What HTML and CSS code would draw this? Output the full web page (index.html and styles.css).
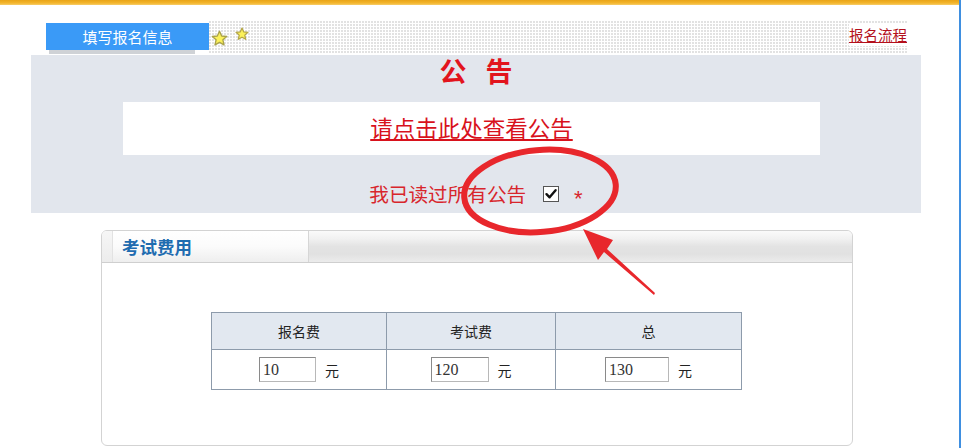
FILE: index.html
```html
<!DOCTYPE html>
<html lang="zh-CN">
<head>
<meta charset="utf-8">
<title>填写报名信息</title>
<link rel="stylesheet" href="styles.css">
</head>
<body>
<div class="page">
  <div class="topbar"></div>

  <div class="tabbar">
    <div class="tabwrap">
      <div class="tab">填写报名信息</div>
      <div class="tab-shadow"></div>
    </div>
    <div class="dotted">
      <svg class="star s1" viewBox="0 0 20 20" width="17" height="17"><polygon points="10,1.5 12.6,7 18.5,7.6 14,11.6 15.3,17.6 10,14.6 4.7,17.6 6,11.6 1.5,7.6 7.4,7" fill="#fbf15a" stroke="#a9a24a" stroke-width="1.6" stroke-linejoin="round"/></svg>
      <svg class="star s2" viewBox="0 0 20 20" width="14" height="14"><polygon points="10,1.5 12.6,7 18.5,7.6 14,11.6 15.3,17.6 10,14.6 4.7,17.6 6,11.6 1.5,7.6 7.4,7" fill="#fbf15a" stroke="#b3a648" stroke-width="1.8" stroke-linejoin="round"/></svg>
      <a class="flow" href="#">报名流程</a>
    </div>
  </div>

  <div class="notice">
    <div class="notice-title"><span>公</span><span>告</span></div>
    <div class="notice-box"><a href="#" class="notice-link">请点击此处查看公告</a></div>
    <div class="agree">
      <span class="agree-text">我已读过所有公告</span>
      <span class="checkbox"><svg viewBox="0 0 14 14" width="14" height="14"><path d="M2.5 7.2 L5.6 10.3 L11.6 3.2" fill="none" stroke="#111" stroke-width="2.4" stroke-linecap="round" stroke-linejoin="round"/></svg></span>
      <span class="req">*</span>
    </div>
  </div>

  <div class="fee">
    <div class="fee-head">
      <div class="fee-head-left"></div>
      <div class="fee-title">考试费用</div>
    </div>
    <div class="fee-body">
      <table class="fee-table">
        <tr>
          <th class="c1">报名费</th>
          <th class="c2">考试费</th>
          <th class="c3">总</th>
        </tr>
        <tr>
          <td><span class="cell"><span class="inp w1">10</span><span class="unit">元</span></span></td>
          <td><span class="cell"><span class="inp w2">120</span><span class="unit">元</span></span></td>
          <td><span class="cell"><span class="inp w3">130</span><span class="unit">元</span></span></td>
        </tr>
      </table>
    </div>
  </div>

  <svg class="annot" width="961" height="448" viewBox="0 0 961 448">
    <ellipse cx="540" cy="191" rx="76" ry="41" fill="none" stroke="#e8272c" stroke-width="6" transform="rotate(-5 540 191)"/>
    <polygon points="583,229 613,240 607,249 655,293 654,295 604,252 598,260" fill="#e8272c"/>
  </svg>
</div>
</body>
</html>
```

FILE: styles.css
```css
* { box-sizing: border-box; }
html, body { margin: 0; padding: 0; background: #fff; }
body { font-family: "Noto Sans CJK SC", "Noto Sans", sans-serif; }

.page {
  position: relative;
  width: 961px;
  height: 448px;
  overflow: hidden;
  border-right: 2px solid #3f8fe0;
  background: #fff;
}

.topbar {
  height: 5px;
  width: 959px;
  background: linear-gradient(#e9a417, #f3b52c 60%, #f7cd6a);
}

/* tab bar */
.tabbar {
  display: flex;
  margin: 16px 0 0 46px;
  width: 861px;
  height: 33px;
}
.tabwrap { width: 163px; }
.tab {
  margin-top: 2px;
  height: 27px;
  background: #3a9af7;
  color: #fff;
  font-size: 15px;
  line-height: 27px;
  text-align: center;
}
.tab-shadow {
  margin-left: 3px;
  width: 146px;
  height: 4px;
  background: #cfd2d6;
}
.dotted {
  flex: 1;
  height: 32px;
  display: flex;
  align-items: flex-start;
  background-color: #fff;
  background-image: radial-gradient(circle at 1px 1px, #e2e2e2 0.8px, transparent 1px);
  background-size: 3px 3px;
}
.star { display: block; }
.s1 { margin: 9px 0 0 2px; }
.s2 { margin: 6px 0 0 7px; }
.flow {
  margin-left: auto;
  margin-top: 3px;
  color: #b4101c;
  font-size: 14.5px;
  line-height: 22px;
  text-decoration: underline;
  background: #fff;
}

/* notice panel */
.notice {
  display: flow-root;
  margin: 1px 0 0 31px;
  width: 890px;
  height: 158px;
  background: #e2e6ed;
}
.notice-title {
  display: flex;
  justify-content: center;
  gap: 19px;
  margin-top: -4px;
  height: 40px;
  color: #e2141d;
  font-size: 27px;
  font-weight: bold;
  line-height: 40px;
}
.notice-box {
  margin: 11px 0 0 92px;
  width: 697px;
  height: 53px;
  background: #fff;
  text-align: center;
  line-height: 51px;
}
.notice-link {
  color: #d8121c;
  font-size: 22.5px;
  text-decoration: underline;
  text-decoration-thickness: 1.5px;
  text-underline-offset: 2px;
}
.agree {
  margin-top: 20px;
  height: 38px;
  display: flex;
  justify-content: center;
  align-items: center;
  color: #d8252c;
}
.agree-text { font-size: 19.6px; line-height: 38px; }
.checkbox {
  margin-left: 17px;
  width: 16px;
  height: 16px;
  border: 1px solid #555;
  background: #fff;
  display: flex;
  align-items: center;
  justify-content: center;
}
.checkbox svg { display: block; }
.req {
  margin-left: 15px;
  font-family: "Liberation Sans", sans-serif;
  font-size: 22px;
  line-height: 38px;
  padding-top: 9px;
  color: #d8252c;
}

/* fee box */
.fee {
  margin: 17px 0 0 101px;
  width: 752px;
  height: 216px;
  border: 1px solid #d3d3d3;
  border-radius: 6px;
  overflow: hidden;
  background: #fff;
}
.fee-head {
  display: flex;
  height: 32px;
  border-bottom: 1px solid #cfcfcf;
  background: linear-gradient(#fafafa 0%, #f1f1f1 25%, #e3e3e3 50%, #e1e1e1 75%, #ececec 100%);
}
.fee-head-left {
  width: 11px;
  background: linear-gradient(#f6f6f6, #ececec);
  border-right: 1px solid #e2e2e2;
}
.fee-title {
  width: 196px;
  padding-left: 9px;
  background: linear-gradient(#ffffff 0%, #fbfbfb 50%, #eeeeee 100%);
  border-right: 1px solid #d6d6d6;
  color: #1f6cb0;
  font-size: 17.5px;
  font-weight: bold;
  line-height: 31px;
}
.fee-body {
  padding: 49px 0 0 109px;
}
.fee-table {
  border-collapse: collapse;
  width: 531px;
  font-size: 14px;
  color: #222;
}
.fee-table th, .fee-table td {
  border: 1px solid #8d9bab;
  text-align: center;
  padding: 0;
}
.fee-table th {
  height: 37px;
  background: #e2e8f0;
  font-weight: normal;
}
.fee-table td { height: 40px; }
.c1 { width: 175px; }
.c2 { width: 169px; }
.c3 { width: 186px; }
.cell {
  display: inline-flex;
  align-items: center;
  vertical-align: middle;
}
.inp {
  display: block;
  height: 25px;
  border: 1px solid #8a8a8a;
  border-right-color: #b8b8b8;
  border-bottom-color: #b8b8b8;
  padding-left: 3px;
  font-family: "Liberation Serif", serif;
  font-size: 16px;
  line-height: 23px;
  color: #333;
  text-align: left;
}
.w1 { width: 57px; }
.w2 { width: 58px; }
.w3 { width: 64px; }
.unit {
  margin-left: 9px;
  font-size: 14px;
}

.annot {
  position: absolute;
  left: 0;
  top: 0;
  pointer-events: none;
}
```
